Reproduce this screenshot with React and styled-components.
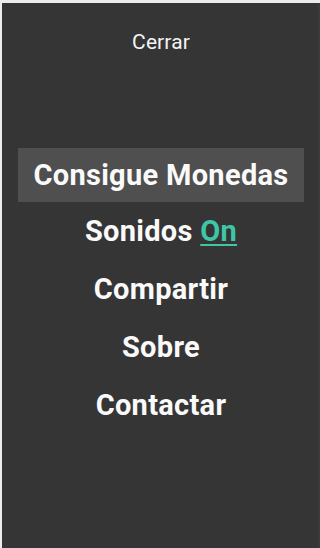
import React from "react";
import styled, { createGlobalStyle } from "styled-components";

const Global = createGlobalStyle`
  html, body {
    margin: 0;
    padding: 0;
    background: #ffffff;
  }
  * {
    box-sizing: border-box;
  }
`;

const Screen = styled.div`
  width: 320px;
  height: 548px;
  background: #353535;
  border-top: 3px solid #ececec;
  border-left: 2px solid #ececec;
  box-shadow: inset -2px 0 0 #3a3a3a;
  display: flex;
  flex-direction: column;
  align-items: center;
  font-family: Roboto, "Liberation Sans", sans-serif;
  color: #fafafa;
`;

const Close = styled.button`
  margin-top: 27px;
  height: 24px;
  line-height: 24px;
  padding: 0;
  border: none;
  background: none;
  color: #f4f4f4;
  font-family: inherit;
  font-size: 21px;
  font-weight: 400;
  letter-spacing: 0.1px;
  cursor: pointer;
`;

const Menu = styled.ul`
  list-style: none;
  margin: 94px 0 0;
  padding: 0;
  display: flex;
  flex-direction: column;
  align-items: center;
`;

const Item = styled.li`
  height: ${(p) => (p.active ? "54px" : "58px")};
  line-height: ${(p) => (p.active ? "54px" : "58px")};
  padding: ${(p) => (p.active ? "0 15px" : "0")};
  background: ${(p) => (p.active ? "#4f4f4f" : "transparent")};
  font-size: 29px;
  font-weight: 700;
  letter-spacing: 0.3px;
  white-space: nowrap;
  cursor: pointer;
`;

const Toggle = styled.span`
  color: #3ec6a6;
  text-decoration: underline;
  text-decoration-thickness: 2px;
  text-underline-offset: 3px;
`;

export default function App() {
  return (
    <>
      <Global />
      <Screen>
        <Close>Cerrar</Close>
        <Menu>
          <Item active>Consigue Monedas</Item>
          <Item>
            Sonidos <Toggle>On</Toggle>
          </Item>
          <Item>Compartir</Item>
          <Item>Sobre</Item>
          <Item>Contactar</Item>
        </Menu>
      </Screen>
    </>
  );
}
